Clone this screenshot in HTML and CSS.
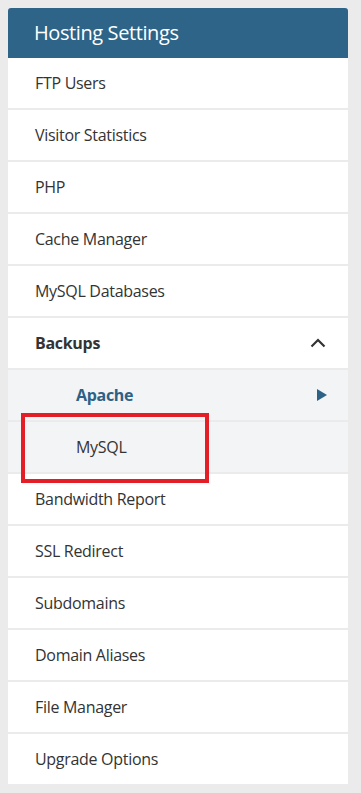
FILE: index.html
```html
<!DOCTYPE html>
<html lang="en">

<head>
  <meta charset="UTF-8">
  <meta name="viewport" content="width=device-width, initial-scale=1.0">
  <title>Hosting Settings</title>
  <link rel="stylesheet" href="styles.css">
</head>

<body>
  <nav class="panel">
    <h2 class="panel-title">Hosting Settings</h2>
    <ul class="menu">
      <li class="menu-item">FTP Users</li>
      <li class="menu-item">Visitor Statistics</li>
      <li class="menu-item">PHP</li>
      <li class="menu-item">Cache Manager</li>
      <li class="menu-item">MySQL Databases</li>
      <li class="menu-item is-open">
        Backups
        <svg class="chevron" width="16" height="10" viewBox="0 0 16 10">
          <path d="M1.5 8.5 L8 2 L14.5 8.5" fill="none" stroke="#333" stroke-width="2.2" />
        </svg>
      </li>
      <li class="menu-item sub is-active">
        Apache
        <svg class="arrow" width="10" height="12" viewBox="0 0 10 12">
          <path d="M0 0 L10 6 L0 12 Z" fill="#2b6286" />
        </svg>
      </li>
      <li class="menu-item sub highlight">MySQL</li>
      <li class="menu-item">Bandwidth Report</li>
      <li class="menu-item">SSL Redirect</li>
      <li class="menu-item">Subdomains</li>
      <li class="menu-item">Domain Aliases</li>
      <li class="menu-item">File Manager</li>
      <li class="menu-item">Upgrade Options</li>
    </ul>
  </nav>
</body>

</html>
```

FILE: styles.css
```css
html {
  box-sizing: border-box;
  font-family: 'Open Sans', 'Noto Sans', sans-serif;
  font-size: 16px;
}

*,
*:after,
*:before {
  box-sizing: inherit;
}

body {
  margin: 0;
  padding: 8px 13px 9px 8px;
  background-color: #ebebeb;
}

.panel {
  border-radius: 3px 3px 0 0;
  overflow: hidden;
}

.panel-title {
  margin: 0;
  height: 50px;
  padding: 0 0 2px 26px;
  display: flex;
  align-items: center;
  background-color: #2d6488;
  color: #fff;
  font-size: 20px;
  font-weight: normal;
  letter-spacing: -.4px;
}

.menu {
  margin: 0;
  padding: 0;
  list-style: none;
  display: flex;
  flex-direction: column;
  gap: 2px;
}

.menu-item {
  position: relative;
  height: 50px;
  padding: 0 22px 0 27px;
  display: flex;
  align-items: center;
  justify-content: space-between;
  background-color: #fff;
  color: #333;
  font-size: 16px;
  letter-spacing: -.3px;
}

.is-open {
  font-weight: bold;
}

.sub {
  padding-left: 68px;
  background-color: #f3f4f6;
}

.is-active {
  color: #2b6286;
  font-weight: bold;
}

.arrow {
  margin-right: -1px;
}

.highlight {
  z-index: 1;
}

.highlight::after {
  content: '';
  position: absolute;
  left: 13px;
  top: -9px;
  width: 188px;
  height: 70px;
  border: 4px solid #e31e26;
}
```
